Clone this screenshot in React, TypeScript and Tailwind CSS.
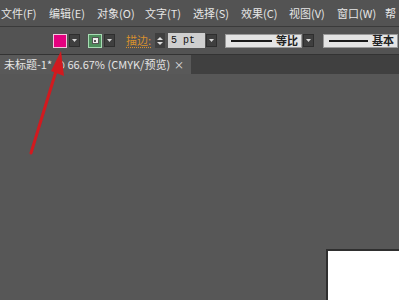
import React from 'react';

const menus = ['文件(F)', '编辑(E)', '对象(O)', '文字(T)', '选择(S)', '效果(C)', '视图(V)', '窗口(W)', '帮'];

const Caret = () => (
  <div className="w-[11px] h-[13px] bg-[#3f3f3f] border border-[#2e2e2e] flex items-center justify-center shrink-0">
    <svg width="5" height="3" viewBox="0 0 5 3">
      <path d="M0 0 H5 L2.5 3 Z" fill="#d8d8d8" />
    </svg>
  </div>
);

function LineBox({ label, width }: { label: string; width: string }) {
  return (
    <div className={`${width} h-[14px] bg-[#e4e4e4] border border-[#9a9a9a] flex items-center pl-[5px] pr-[3px] gap-[4px] shrink-0`}>
      <div className="flex-1 h-[2px] bg-[#1a1a1a]" />
      <span className="text-[11px] leading-none text-[#222] font-bold whitespace-nowrap">{label}</span>
    </div>
  );
}

export default function App() {
  return (
    <div
      className="relative w-[399px] h-[300px] overflow-hidden bg-[#575757] flex flex-col"
      style={{ fontFamily: '"Noto Sans CJK SC", "Noto Sans", sans-serif' }}
    >
      {/* menu bar */}
      <div className="h-[27px] bg-[#535353] flex items-center pl-[1px] gap-[10px] text-[11px] text-[#e6e6e6] border-b border-[#3a3a3a] whitespace-nowrap">
        {menus.map((m) => (
          <span key={m} className="w-[38px] shrink-0">{m}</span>
        ))}
      </div>

      {/* control bar */}
      <div className="h-[28px] bg-[#535353] border-b border-[#333] flex items-center pl-[53px] whitespace-nowrap">
        <div className="w-[14px] h-[14px] bg-[#e4007f] border border-[#f2c6dd] shrink-0" />
        <div className="ml-[2px]"><Caret /></div>
        <div className="ml-[8px] w-[14px] h-[14px] bg-[#4d8d5c] border border-[#a7dcb3] flex items-center justify-center shrink-0">
          <div className="w-[7px] h-[7px] bg-[#eee] border border-[#555] flex items-center justify-center">
            <div className="w-[2px] h-[2px] bg-[#555]" />
          </div>
        </div>
        <div className="ml-[2px]"><Caret /></div>
        <span className="ml-[11px] shrink-0 text-[11px] text-[#d8902e] underline decoration-dotted underline-offset-2">描边:</span>
        <div className="ml-[4px] w-[10px] h-[15px] bg-[#3f3f3f] flex flex-col items-center justify-center gap-[2px] shrink-0">
          <svg width="6" height="3" viewBox="0 0 6 3"><path d="M0 3 L3 0 L6 3 Z" fill="#ddd" /></svg>
          <svg width="6" height="3" viewBox="0 0 6 3"><path d="M0 0 L6 0 L3 3 Z" fill="#ddd" /></svg>
        </div>
        <div
          className="ml-[3px] w-[37px] h-[15px] bg-[#cfcfcf] text-[10px] leading-[15px] pl-[3px] text-[#111] shrink-0"
          style={{ fontFamily: '"Liberation Mono", monospace' }}
        >
          5 pt
        </div>
        <div className="ml-[1px]"><Caret /></div>
        <div className="ml-[8px]"><LineBox label="等比" width="w-[77px]" /></div>
        <div className="ml-[1px]"><Caret /></div>
        <div className="ml-[9px]"><LineBox label="基本" width="w-[75px]" /></div>
      </div>

      {/* tab bar */}
      <div className="h-[19px] bg-[#404040] flex items-stretch">
        <div className="w-[191px] bg-[#595959] flex items-center pl-[4px] text-[11px] text-[#e4e4e4] whitespace-nowrap">
          <span>未标题-1* @ 66.67% (CMYK/预览)</span>
          <span className="ml-auto mr-[7px] text-[10px]">×</span>
        </div>
      </div>

      {/* canvas */}
      <div className="flex-1 relative">
        <div className="absolute left-[326px] top-[175px] w-[80px] h-[60px] bg-white border-l-2 border-t-2 border-[#2f2f2f]" />
      </div>

      {/* red arrow */}
      <svg className="absolute left-0 top-0" width="399" height="300" viewBox="0 0 399 300">
        <line x1="31" y1="153" x2="57" y2="68" stroke="#d21a1f" strokeWidth="3" strokeLinecap="round" />
        <path d="M61 51 L64 76 L51 71 Z" fill="#d21a1f" />
      </svg>
    </div>
  );
}
